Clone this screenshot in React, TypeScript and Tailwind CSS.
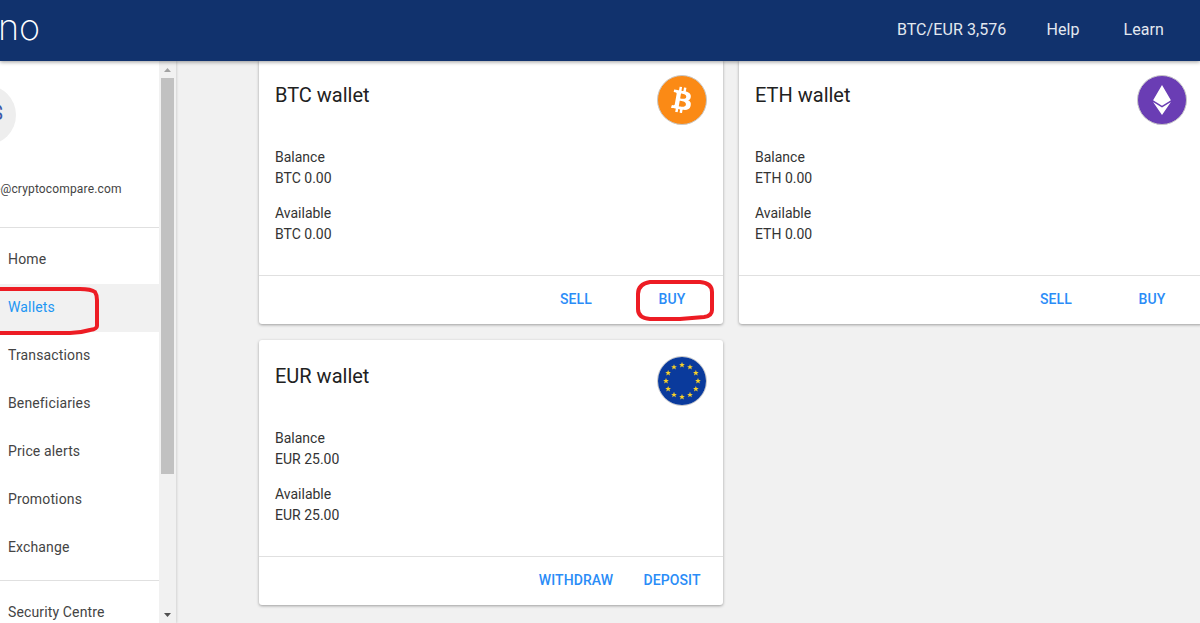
import React from "react";
import { FaBtc, FaEthereum } from "react-icons/fa";

function Eu() {
  const stars = Array.from({ length: 12 }, (_, i) => {
    const a = (i * Math.PI) / 6;
    return [24 + 16 * Math.sin(a), 24 - 16 * Math.cos(a)];
  });
  return (
    <svg viewBox="0 0 48 48" className="w-full h-full">
      <rect width="48" height="48" fill="#0a3a9c" />
      {stars.map(([x, y], i) => (
        <polygon
          key={i}
          transform={`translate(${x} ${y}) scale(1.15)`}
          fill="#f6d02a"
          points="0,-2.6 0.7,-0.8 2.5,-0.8 1.1,0.3 1.6,2.1 0,1 -1.6,2.1 -1.1,0.3 -2.5,-0.8 -0.7,-0.8"
        />
      ))}
    </svg>
  );
}

function Card({ title, cur, amount, icon, actions }: { title: string; cur: string; amount: string; icon: React.ReactNode; actions: string[] }) {
  return (
    <div className="bg-white rounded-[3px] shadow-[0_1px_3px_rgba(0,0,0,0.35)] h-[265px] flex flex-col">
      <div className="flex-1 p-4 pb-0">
        <div className="flex justify-between items-start h-[50px]">
          <div className="text-[20px] leading-10 text-[#212121]">{title}</div>
          {icon}
        </div>
        <div className="mt-[22px] text-[14px] leading-[21px] text-[#333]">
          <div>Balance</div>
          <div>{cur} {amount}</div>
          <div className="mt-[14px]">Available</div>
          <div>{cur} {amount}</div>
        </div>
      </div>
      <div className="h-[49px] border-t border-[#e0e0e0] flex justify-end items-center gap-2 pr-[7px] pb-[2px]">
        {actions.map((a) => (
          <div key={a} className="w-[88px] text-center text-[14px] font-medium tracking-[0.1px] text-[#2a8cf7]">{a}</div>
        ))}
      </div>
    </div>
  );
}

const nav = ["Home", "Wallets", "Transactions", "Beneficiaries", "Price alerts", "Promotions", "Exchange"];

export default function App() {
  return (
    <div className="relative w-[1200px] h-[623px] overflow-hidden flex flex-col bg-[#f1f1f1] font-['Roboto',sans-serif]">
      <header className="relative z-10 h-[61px] shrink-0 bg-[#11326d] shadow-[0_1px_4px_rgba(0,0,0,0.4)] flex items-center justify-between text-[#e3e8f0] text-[16px]">
        <div className="-ml-[2px] -mt-[8px] text-[36px] leading-none font-extralight font-['Inter',sans-serif] text-white w-[46px]">no</div>
        <div className="flex items-center pr-[36px] -mt-[1px] tracking-[0.08px]">
          <span>BTC/EUR 3,576</span>
          <span className="ml-[40px]">Help</span>
          <span className="ml-[44px]">Learn</span>
        </div>
      </header>
      <div className="flex flex-1 min-h-0">
        <aside className="w-[176px] shrink-0 flex bg-[#f1f1f1] shadow-[1px_0_2px_rgba(0,0,0,0.12)] overflow-hidden">
          <div className="w-[159px] bg-white shrink-0 overflow-hidden text-[14px] tracking-[0.14px] text-[#444]">
            <div className="h-[167px] border-b border-[#e0e0e0] overflow-hidden">
              <div className="mt-[24px] -ml-[44px] w-[60px] h-[60px] rounded-full bg-[#eeeeee] relative">
                <span className="absolute left-[36px] top-[14px] text-[#3a5ba8] text-[20px] leading-[28px]">$</span>
              </div>
              <div className="mt-[36px] -ml-[6px] text-[12px] leading-[16px] tracking-[0.15px] whitespace-nowrap text-[#444]">e@cryptocompare.com</div>
            </div>
            <nav className="py-2 border-b border-[#e0e0e0]">
              {nav.map((n) => (
                <div key={n} className={`h-[48px] flex items-center pl-2 pb-[2px] ${n === "Wallets" ? "bg-[#f1f1f1] text-[#2196f3]" : ""}`}>{n}</div>
              ))}
            </nav>
            <div className="h-[48px] mt-2 flex items-center pl-2 pb-[2px]">Security Centre</div>
          </div>
          <div className="w-[17px] flex flex-col items-center">
            <svg viewBox="0 0 17 17" className="w-[17px] h-[17px] shrink-0"><polygon points="8.5,7 12,11 5,11" fill="#a3a3a3" /></svg>
            <div className="w-[13px] h-[396px] bg-[#c1c1c1]" />
            <div className="flex-1" />
            <svg viewBox="0 0 17 17" className="w-[17px] h-[17px] shrink-0"><polygon points="8.5,11 12,7 5,7" fill="#505050" /></svg>
          </div>
        </aside>
        <main className="flex-1 min-w-0 overflow-hidden pl-[83px] -mt-[2px]">
          <div className="grid grid-cols-[464px_464px] gap-4">
            <Card
              title="BTC wallet"
              cur="BTC"
              amount="0.00"
              actions={["SELL", "BUY"]}
              icon={
                <div className="w-[50px] h-[50px] rounded-full bg-[#fb8a15] border border-[#c8c8c8] flex items-center justify-center">
                  <FaBtc className="text-white text-[26px] rotate-[10deg]" />
                </div>
              }
            />
            <Card
              title="ETH wallet"
              cur="ETH"
              amount="0.00"
              actions={["SELL", "BUY"]}
              icon={
                <div className="w-[50px] h-[50px] rounded-full bg-[#6a3db4] border border-[#c8c8c8] flex items-center justify-center">
                  <FaEthereum className="text-white text-[30px]" />
                </div>
              }
            />
            <Card
              title="EUR wallet"
              cur="EUR"
              amount="25.00"
              actions={["WITHDRAW", "DEPOSIT"]}
              icon={
                <div className="w-[50px] h-[50px] rounded-full overflow-hidden border border-[#c8c8c8]">
                  <Eu />
                </div>
              }
            />
          </div>
        </main>
      </div>
      <svg className="absolute left-0 top-0 z-20 pointer-events-none" width="1200" height="623" fill="none" stroke="#ed1c24" strokeWidth="4">
        <path d="M0 289 H80 Q91 289 95 292 Q97 295 97 300 V326 Q97 329 90 330 Q80 333 70 333 H0" />
        <path d="M650 282 H700 Q712 283 712 292 V310 Q712 316 704 317 L680 319 H650 Q638 318 638 309 V294 Q638 284 650 282 Z" />
      </svg>
    </div>
  );
}
